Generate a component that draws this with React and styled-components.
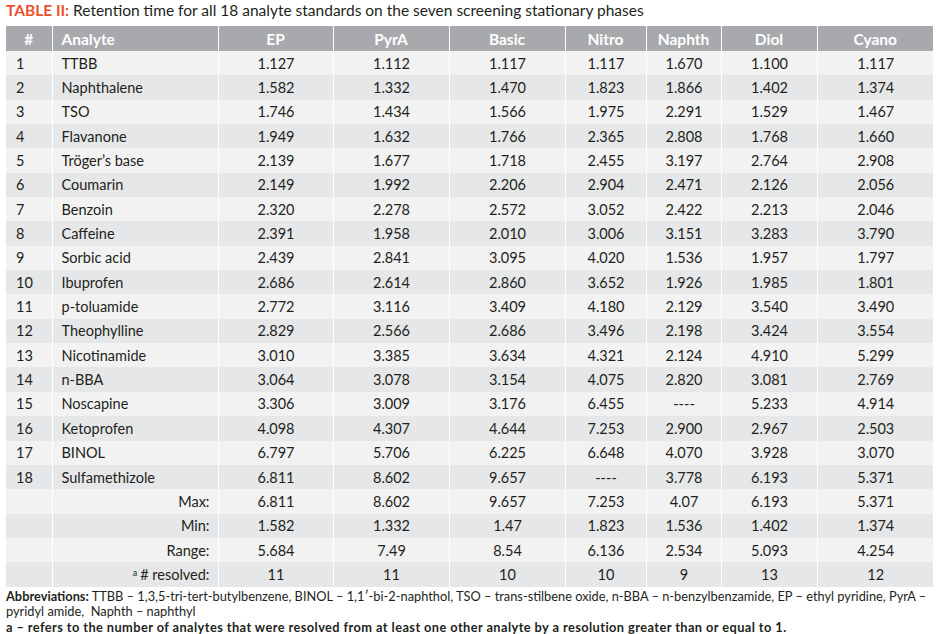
import React from 'react';
import styled, { createGlobalStyle } from 'styled-components';

const GlobalStyle = createGlobalStyle`
  body {
    margin: 0;
    background: #ffffff;
    font-family: Lato, "Open Sans", sans-serif;
    color: #231f20;
  }
`;

const Page = styled.div`
  width: 938px;
  height: 634px;
  padding: 0 5px 0 6px;
  box-sizing: border-box;
`;

const Title = styled.h1`
  margin: 0;
  height: 26px;
  font-size: 15.5px;
  line-height: 20px;
  font-weight: 400;
  color: #231f20;
`;

const Label = styled.span`
  color: #e8512e;
  font-weight: 700;
`;

const Table = styled.table`
  width: 927px;
  border-collapse: collapse;
  table-layout: fixed;
  font-size: 14.5px;
`;

const HeadCell = styled.th`
  background: #a7a9ac;
  color: #ffffff;
  font-weight: 700;
  font-size: 15.5px;
  height: 25px;
  padding: 0 ${p => (p.$left ? '9px' : '4px')};
  text-align: ${p => (p.$left ? 'left' : 'center')};
  border-left: 1px solid #ffffff;
  &:first-child { border-left: none; }
`;

const Row = styled.tr`
  background: ${p => (p.$dark ? '#e6e7e8' : '#f2f2f2')};
`;

const Cell = styled.td`
  height: 24.35px;
  padding: 0 8px 0 9px;
  text-align: ${p => p.$align || 'center'};
  border-left: 1px solid #ffffff;
  white-space: nowrap;
  &:first-child { border-left: none; padding-left: 10px; }
`;

const Sup = styled.sup`
  font-size: 9px;
  vertical-align: 4px;
  margin-right: 3px;
`;

const Notes = styled.div`
  margin-top: 2px;
  font-size: 12.8px;
  line-height: 15.5px;
`;

const Bold = styled.span`
  font-weight: 700;
  letter-spacing: ${p => (p.$wide ? '0.42px' : '0')};
`;

const columns = ['EP', 'PyrA', 'Basic', 'Nitro', 'Naphth', 'Diol', 'Cyano'];
const widths = [46, 166, 115, 116, 116, 81, 75, 96, 116];

const rows = [
  ['TTBB', '1.127', '1.112', '1.117', '1.117', '1.670', '1.100', '1.117'],
  ['Naphthalene', '1.582', '1.332', '1.470', '1.823', '1.866', '1.402', '1.374'],
  ['TSO', '1.746', '1.434', '1.566', '1.975', '2.291', '1.529', '1.467'],
  ['Flavanone', '1.949', '1.632', '1.766', '2.365', '2.808', '1.768', '1.660'],
  ['Tröger’s base', '2.139', '1.677', '1.718', '2.455', '3.197', '2.764', '2.908'],
  ['Coumarin', '2.149', '1.992', '2.206', '2.904', '2.471', '2.126', '2.056'],
  ['Benzoin', '2.320', '2.278', '2.572', '3.052', '2.422', '2.213', '2.046'],
  ['Caffeine', '2.391', '1.958', '2.010', '3.006', '3.151', '3.283', '3.790'],
  ['Sorbic acid', '2.439', '2.841', '3.095', '4.020', '1.536', '1.957', '1.797'],
  ['Ibuprofen', '2.686', '2.614', '2.860', '3.652', '1.926', '1.985', '1.801'],
  ['p-toluamide', '2.772', '3.116', '3.409', '4.180', '2.129', '3.540', '3.490'],
  ['Theophylline', '2.829', '2.566', '2.686', '3.496', '2.198', '3.424', '3.554'],
  ['Nicotinamide', '3.010', '3.385', '3.634', '4.321', '2.124', '4.910', '5.299'],
  ['n-BBA', '3.064', '3.078', '3.154', '4.075', '2.820', '3.081', '2.769'],
  ['Noscapine', '3.306', '3.009', '3.176', '6.455', '----', '5.233', '4.914'],
  ['Ketoprofen', '4.098', '4.307', '4.644', '7.253', '2.900', '2.967', '2.503'],
  ['BINOL', '6.797', '5.706', '6.225', '6.648', '4.070', '3.928', '3.070'],
  ['Sulfamethizole', '6.811', '8.602', '9.657', '----', '3.778', '6.193', '5.371'],
];

const summary = [
  ['Max:', '6.811', '8.602', '9.657', '7.253', '4.07', '6.193', '5.371'],
  ['Min:', '1.582', '1.332', '1.47', '1.823', '1.536', '1.402', '1.374'],
  ['Range:', '5.684', '7.49', '8.54', '6.136', '2.534', '5.093', '4.254'],
  ['# resolved:', '11', '11', '10', '10', '9', '13', '12'],
];

const App = () => (
  <Page>
    <GlobalStyle />
    <Title>
      <Label>TABLE II:</Label> Retention time for all 18 analyte standards on the seven screening stationary phases
    </Title>
    <Table>
      <colgroup>
        {widths.map((w, i) => <col key={i} style={{ width: w }} />)}
      </colgroup>
      <thead>
        <tr>
          <HeadCell>#</HeadCell>
          <HeadCell $left>Analyte</HeadCell>
          {columns.map(c => <HeadCell key={c}>{c}</HeadCell>)}
        </tr>
      </thead>
      <tbody>
        {rows.map(([name, ...vals], i) => (
          <Row key={name} $dark={i % 2 === 1}>
            <Cell $align="left">{i + 1}</Cell>
            <Cell $align="left">{name}</Cell>
            {vals.map((v, j) => <Cell key={j}>{v}</Cell>)}
          </Row>
        ))}
        {summary.map(([label, ...vals], i) => (
          <Row key={label} $dark={i % 2 === 1}>
            <Cell />
            <Cell $align="right">
              {i === 3 && <Sup>a</Sup>}
              {label}
            </Cell>
            {vals.map((v, j) => <Cell key={j}>{v}</Cell>)}
          </Row>
        ))}
      </tbody>
    </Table>
    <Notes>
      <Bold>Abbreviations:</Bold> TTBB – 1,3,5-tri-tert-butylbenzene, BINOL – 1,1′-bi-2-naphthol, TSO – trans-stilbene oxide, n-BBA – n-benzylbenzamide, EP – ethyl pyridine, PyrA – pyridyl amide,&nbsp; Naphth – naphthyl
      <br />
      <Bold $wide>a – refers to the number of analytes that were resolved from at least one other analyte by a resolution greater than or equal to 1.</Bold>
    </Notes>
  </Page>
);

export default App;
